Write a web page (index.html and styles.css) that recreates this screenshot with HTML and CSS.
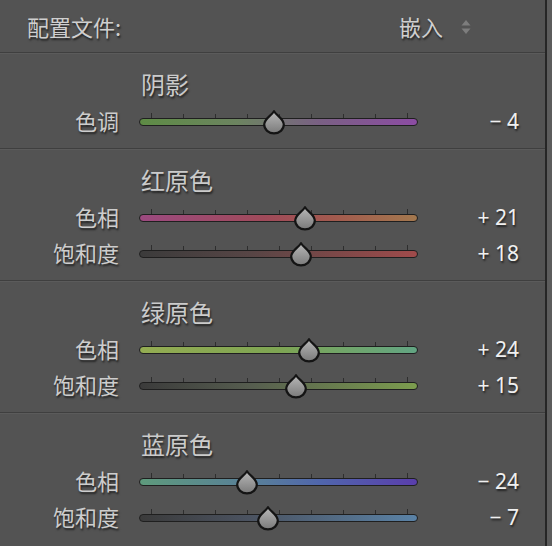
FILE: index.html
```html
<!DOCTYPE html>
<html lang="zh">
<head>
<meta charset="utf-8">
<link rel="stylesheet" href="styles.css">
</head>
<body>
<div class="panel">
  <div class="header">
    <span class="hlabel">配置文件:</span>
    <span class="hval">嵌入
      <svg class="updown" width="12" height="18" viewBox="0 0 12 18"><path d="M6 2 L10.5 7.5 H1.5 Z" fill="#7d7d7d"/><path d="M6 16 L10.5 10.5 H1.5 Z" fill="#7d7d7d"/></svg>
    </span>
  </div>

  <section class="group">
    <div class="title">阴影</div>
    <div class="row">
      <span class="label">色调</span>
      <div class="slider">
        <div class="ticks"><i></i><i></i><i></i><i></i><i></i><i></i><i></i><i></i><i></i></div>
        <div class="track tr-tone"></div>
        <svg class="thumb" style="left:124px" width="22" height="26" viewBox="0 0 22 26"><use href="#drop"/></svg>
      </div>
      <span class="value">− 4</span>
    </div>
  </section>

  <section class="group">
    <div class="title">红原色</div>
    <div class="row">
      <span class="label">色相</span>
      <div class="slider">
        <div class="ticks"><i></i><i></i><i></i><i></i><i></i><i></i><i></i><i></i><i></i></div>
        <div class="track tr-red-h"></div>
        <svg class="thumb" style="left:155px" width="22" height="26" viewBox="0 0 22 26"><use href="#drop"/></svg>
      </div>
      <span class="value">+ 21</span>
    </div>
    <div class="row">
      <span class="label">饱和度</span>
      <div class="slider">
        <div class="ticks"><i></i><i></i><i></i><i></i><i></i><i></i><i></i><i></i><i></i></div>
        <div class="track tr-red-s"></div>
        <svg class="thumb" style="left:151px" width="22" height="26" viewBox="0 0 22 26"><use href="#drop"/></svg>
      </div>
      <span class="value">+ 18</span>
    </div>
  </section>

  <section class="group">
    <div class="title">绿原色</div>
    <div class="row">
      <span class="label">色相</span>
      <div class="slider">
        <div class="ticks"><i></i><i></i><i></i><i></i><i></i><i></i><i></i><i></i><i></i></div>
        <div class="track tr-green-h"></div>
        <svg class="thumb" style="left:159px" width="22" height="26" viewBox="0 0 22 26"><use href="#drop"/></svg>
      </div>
      <span class="value">+ 24</span>
    </div>
    <div class="row">
      <span class="label">饱和度</span>
      <div class="slider">
        <div class="ticks"><i></i><i></i><i></i><i></i><i></i><i></i><i></i><i></i><i></i></div>
        <div class="track tr-green-s"></div>
        <svg class="thumb" style="left:146px" width="22" height="26" viewBox="0 0 22 26"><use href="#drop"/></svg>
      </div>
      <span class="value">+ 15</span>
    </div>
  </section>

  <section class="group">
    <div class="title">蓝原色</div>
    <div class="row">
      <span class="label">色相</span>
      <div class="slider">
        <div class="ticks"><i></i><i></i><i></i><i></i><i></i><i></i><i></i><i></i><i></i></div>
        <div class="track tr-blue-h"></div>
        <svg class="thumb" style="left:97px" width="22" height="26" viewBox="0 0 22 26"><use href="#drop"/></svg>
      </div>
      <span class="value">− 24</span>
    </div>
    <div class="row">
      <span class="label">饱和度</span>
      <div class="slider">
        <div class="ticks"><i></i><i></i><i></i><i></i><i></i><i></i><i></i><i></i><i></i></div>
        <div class="track tr-blue-s"></div>
        <svg class="thumb" style="left:118px" width="22" height="26" viewBox="0 0 22 26"><use href="#drop"/></svg>
      </div>
      <span class="value">− 7</span>
    </div>
  </section>
</div>

<svg class="defs" width="0" height="0">
  <defs>
    <linearGradient id="thumbfill" x1="0" y1="0" x2="0" y2="1">
      <stop offset="0" stop-color="#b8b8b8"/>
      <stop offset="1" stop-color="#7a7a7a"/>
    </linearGradient>
    <symbol id="drop" viewBox="0 0 22 26">
      <path d="M11 2.2 C13.8 6.8 20.8 9.6 20.8 15.6 A9.8 8.8 0 0 1 1.2 15.6 C1.2 9.6 8.2 6.8 11 2.2 Z" fill="url(#thumbfill)" stroke="#141414" stroke-width="2.2" stroke-linejoin="round"/>
    </symbol>
  </defs>
</svg>
</body>
</html>
```

FILE: styles.css
```css
html, body {
  margin: 0;
  padding: 0;
}
body {
  background: #5c5c5c;
  width: 552px;
  height: 546px;
  overflow: hidden;
  font-family: "Noto Sans CJK SC", "Noto Sans", sans-serif;
}
.panel {
  width: 545px;
  height: 546px;
  background: #535353;
  border-right: 2px solid #262626;
}
.header {
  height: 52px;
  display: flex;
  align-items: center;
  padding-left: 27px;
  color: #cfcfcf;
  font-size: 22px;
  text-shadow: 1px 2px 2px rgba(0, 0, 0, 0.6);
}
.hlabel {
  width: 372px;
}
.hval {
  display: flex;
  align-items: center;
  gap: 17px;
}
.updown {
  margin-top: 2px;
}
.group {
  border-top: 1px solid #3f3f3f;
  box-shadow: inset 0 1px 0 #5b5b5b;
  padding: 12px 0 9px;
}
.title {
  height: 38px;
  line-height: 38px;
  padding-left: 141px;
  font-size: 24px;
  color: #cbcbcb;
  text-shadow: 1px 2px 2px rgba(0, 0, 0, 0.6);
}
.row {
  display: grid;
  grid-template-columns: 119px 279px 81px;
  column-gap: 20px;
  height: 36px;
  align-items: center;
}
.row .label {
  grid-column: 1;
  margin-top: -3px;
  text-align: right;
  font-size: 22px;
  color: #cdcdcd;
  text-shadow: 1px 2px 2px rgba(0, 0, 0, 0.6);
}
.row .slider {
  grid-column: 2;
  position: relative;
  height: 36px;
}
.row .value {
  grid-column: 3;
  text-align: right;
  font-family: "Noto Sans", "Open Sans", sans-serif;
  font-size: 21px;
  color: #f0f0f0;
  text-shadow: 1px 2px 2px rgba(0, 0, 0, 0.6);
}
.ticks {
  position: absolute;
  left: 12px;
  top: 11px;
  width: 257px;
  height: 5px;
  display: flex;
  justify-content: space-between;
}
.ticks i {
  display: block;
  width: 1px;
  height: 5px;
  background: #2e2e2e;
}
.ticks i:first-child, .ticks i:last-child {
  height: 6px;
  margin-top: -1px;
}
.track {
  position: absolute;
  left: 0;
  right: 0;
  top: 15px;
  height: 6px;
  border: 1.5px solid #1f1f1f;
  border-radius: 5px;
}
.thumb {
  position: absolute;
  top: 6px;
}
.defs {
  position: absolute;
}
.tr-tone {
  background: linear-gradient(to right, #5e8c45, #6c8460 35%, #737373 50%, #7a6084 65%, #8c4ca3);
}
.tr-red-h {
  background: linear-gradient(to right, #9c4a80, #a04a5a 45%, #a25a4e 70%, #a3784e);
}
.tr-red-s {
  background: linear-gradient(to right, #3b3b3b, #574545 40%, #a04b4b);
}
.tr-green-h {
  background: linear-gradient(to right, #94ac52, #7ea553 50%, #62a583);
}
.tr-green-s {
  background: linear-gradient(to right, #3b3b3b, #565d4f 40%, #7c9d4e);
}
.tr-blue-h {
  background: linear-gradient(to right, #5e9a7c, #587c9c 45%, #5066ac 65%, #5a3eac);
}
.tr-blue-s {
  background: linear-gradient(to right, #3b3b3b, #4b5361 40%, #5a82a6);
}
```
